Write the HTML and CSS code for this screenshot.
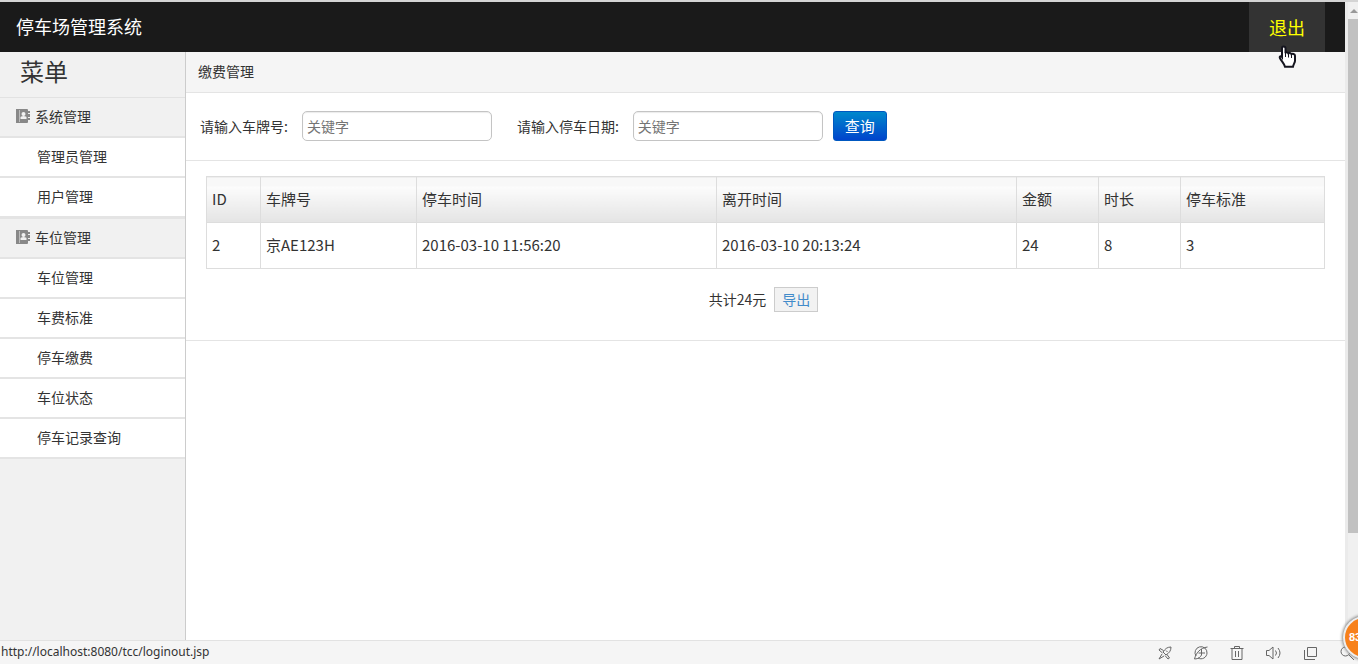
FILE: index.html
```html
<!DOCTYPE html>
<html lang="zh-CN">
<head>
<meta charset="utf-8">
<meta name="viewport" content="width=device-width, initial-scale=1">
<title>停车场管理系统</title>
<link rel="stylesheet" href="styles.css">
</head>
<body>
<div class="viewport">
  <div class="page">
    <header class="topbar">
      <h1 class="brand">停车场管理系统</h1>
      <a class="logout" href="#">退出
        <svg class="pointer" width="19" height="23" viewBox="0 0 19 23" aria-hidden="true">
          <path d="M5.500 1.500c1 0 2 .6 2 1.700v5c0-1 2.500-1.200 3 .3 .5-1 2.500-.8 3 .7 .8-.8 3.500-.3 3.500 1.500v5c0 2-1.500 3-2 6H7c-.8-3-3.500-5.500-5-8.500-1-2 1-2.700 2-1.200V3.200c0-1 .6-1.700 1.500-1.700z" fill="#fff" stroke="#15151f" stroke-width="2"/>
          <path d="M7.500 8v4M10.500 8.500v4M13.500 9.500v3.500" stroke="#15151f" fill="none"/>
        </svg>
      </a>
    </header>
    <div class="body">
      <nav class="sidebar" aria-label="菜单">
        <h2 class="menu-title">菜单</h2>
        <section class="group">
          <h3 class="group-title">
            <svg class="book" width="15" height="14" viewBox="0 0 15 14" aria-hidden="true"><path d="M1 0h11q1 0 1 1v1h2v2h-2v1h2v3h-2v1h2v2h-2v2q0 1-1 1H1z" fill="#888"/><path d="M4.500 1v12" stroke="#bbb"/><circle cx="8.500" cy="5" r="2" fill="#f1f1f1"/><path d="M5.500 10V8.500q0-1.500 3-1.500t3 1.500V10z" fill="#f1f1f1"/></svg>
            系统管理</h3>
          <a class="item" href="#">管理员管理</a>
          <a class="item" href="#">用户管理</a>
        </section>
        <section class="group">
          <h3 class="group-title">
            <svg class="book" width="15" height="14" viewBox="0 0 15 14" aria-hidden="true"><path d="M1 0h11q1 0 1 1v1h2v2h-2v1h2v3h-2v1h2v2h-2v2q0 1-1 1H1z" fill="#888"/><path d="M4.500 1v12" stroke="#bbb"/><circle cx="8.500" cy="5" r="2" fill="#f1f1f1"/><path d="M5.500 10V8.500q0-1.500 3-1.500t3 1.500V10z" fill="#f1f1f1"/></svg>
            车位管理</h3>
          <a class="item" href="#">车位管理</a>
          <a class="item" href="#">车费标准</a>
          <a class="item" href="#">停车缴费</a>
          <a class="item" href="#">车位状态</a>
          <a class="item" href="#">停车记录查询</a>
        </section>
      </nav>
      <main class="main">
        <div class="crumb">缴费管理</div>
        <form class="search">
          <label for="plate">请输入车牌号:</label>
          <input id="plate" class="field" type="text" placeholder="关键字">
          <label class="second" for="date">请输入停车日期:</label>
          <input id="date" class="field" type="text" placeholder="关键字">
          <button class="query" type="button">查询</button>
        </form>
        <section class="results">
          <table class="records">
            <colgroup><col class="c-id"><col class="c-plate"><col class="c-time"><col class="c-time"><col class="c-num"><col class="c-num"><col class="c-std"></colgroup>
            <thead><tr><th>ID</th><th>车牌号</th><th>停车时间</th><th>离开时间</th><th>金额</th><th>时长</th><th>停车标准</th></tr></thead>
            <tbody><tr><td>2</td><td>京AE123H</td><td>2016-03-10 11:56:20</td><td>2016-03-10 20:13:24</td><td>24</td><td>8</td><td>3</td></tr></tbody>
          </table>
          <div class="summary"><span>共计24元</span><a class="export" href="#">导出</a></div>
        </section>
      </main>
    </div>
  </div>
  <div class="scrollbar" aria-hidden="true"><div class="arrow"></div><div class="thumb"></div></div>
</div>
<footer class="status">
  <span class="url">http://localhost:8080/tcc/loginout.jsp</span>
  <div class="tools">
    <svg width="16" height="16" viewBox="0 0 16 16" aria-hidden="true"><path d="M14 2c-4 0-6 2-8 5l3 3c3-2 5-4 5-8zM6.500 5.500L3 3.500 2 5l3.500 3M10 9.500l2.500 3.500L11 14l-3-3.500M5 9l-3 5 5-3M9 5.500l1.500 1.500"/></svg>
    <svg width="16" height="16" viewBox="0 0 16 16" aria-hidden="true"><path d="M3 11A6 6 0 1 1 14 8 6 6 0 0 1 5 13M1.500 14C3 8 7 3 14.500 2M1.500 14c4 0 6-2 7-4M8.500 4v6M5.500 8H12"/></svg>
    <svg width="16" height="16" viewBox="0 0 16 16" aria-hidden="true"><path d="M1.500 3.500h13M5.500 3V1.500h5V3M3 4v10.500h10V4M6.500 6v6M9.500 6v6"/></svg>
    <svg width="18" height="16" viewBox="0 0 18 16" aria-hidden="true"><path d="M1.500 5.500v5h2.500l4 3.500V2L4 5.500zM10.500 5.500q2 2.500 0 5M13 3q4 5 0 10"/></svg>
    <svg width="16" height="16" viewBox="0 0 16 16" aria-hidden="true"><path d="M4.500 2.500h9v9h-9zM1.500 5v9.500H12"/></svg>
    <svg width="16" height="16" viewBox="0 0 16 16" aria-hidden="true"><circle cx="6.500" cy="6.500" r="4.500"/><path d="M10 10l5 5"/></svg>
  </div>
</footer>
<div class="ball-clip"><div class="ball">83</div></div>
</body>
</html>
```
FILE: styles.css
```css
* { box-sizing: border-box; }
body {
  margin: 0;
  height: 100vh;
  display: flex;
  flex-direction: column;
  overflow: hidden;
  position: relative;
  background: #fff;
  color: #333;
  font: 14px/20px "Noto Sans CJK SC", sans-serif;
}
h1, h2, h3 { margin: 0; font-weight: 400; }
a { color: inherit; text-decoration: none; }
.viewport { flex: 1; min-height: 0; display: flex; border-top: 2px solid #d4d4d4; }
.page { flex: 1; min-width: 0; display: flex; flex-direction: column; }
.topbar {
  flex: none;
  height: 50px;
  padding: 0 20px 0 16px;
  display: flex;
  align-items: center;
  justify-content: space-between;
  background: #1a1a1a;
}
.brand { padding-bottom: 2px; color: #fff; font-size: 18px; line-height: 26px; }
.logout {
  position: relative;
  padding: 0 20px;
  background: #333;
  color: #ff0;
  font-size: 18px;
  line-height: 50px;
}
.pointer { position: absolute; left: 29px; top: 43px; z-index: 2; }
.body { flex: 1; min-height: 0; display: flex; }
.sidebar { flex: none; width: 186px; background: #f1f1f1; border-right: 1px solid #ccc; }
.menu-title {
  padding: 0 20px 7px;
  font-size: 24px;
  line-height: 38px;
  border-bottom: 1px solid #e2e2e2;
}
.group + .group { border-top: 1px solid #e4e4e4; }
.group-title {
  display: flex;
  align-items: center;
  gap: 5px;
  height: 40px;
  padding: 0 15px 2px;
  font-size: 14px;
  border-bottom: 2px solid #e4e4e4;
}
.book { margin-bottom: 1px; }
.item {
  display: block;
  height: 40px;
  padding: 0 37px;
  line-height: 36px;
  background: #fff;
  border-bottom: 2px solid #e4e4e4;
}
.main { flex: 1; min-width: 0; }
.crumb {
  padding: 9px 12px 11px;
  background: #f5f5f5;
  border-bottom: 1px solid #e4e4e4;
}
.search {
  display: flex;
  align-items: center;
  padding: 18px 14px 19px;
  border-bottom: 1px solid #e4e4e4;
}
.field {
  width: 190px;
  height: 30px;
  margin: 0 0 0 14px;
  padding: 4px;
  border: 1px solid #c4c4c4;
  border-radius: 5px;
  background: #fff;
  box-shadow: inset 0 1px 1px rgba(0, 0, 0, .08);
  font: inherit;
}
.field::placeholder { color: #757575; opacity: 1; }
.second { margin-left: 25px; }
.query {
  height: 30px;
  margin: 0 0 0 10px;
  padding: 0 11px 1px;
  border: 1px solid #0058c0;
  border-radius: 3px;
  background: linear-gradient(#0088cc, #0044cc);
  color: #fff;
  font: inherit;
  font-size: 15px;
}
.results { padding: 15px 20px 28px; border-bottom: 1px solid #e4e4e4; }
.records {
  width: 100%;
  table-layout: fixed;
  border-collapse: collapse;
  font-size: 15px;
}
.records th, .records td {
  height: 46px;
  padding: 0 5px 2px;
  border: 1px solid #ddd;
  text-align: left;
  font-weight: 400;
}
.records th { background: linear-gradient(#f8f8f8 9px, #fcfcfc 9px, #e4e4e4); }
.c-id { width: 54px; }
.c-plate { width: 156px; }
.c-time { width: 300px; }
.c-num { width: 82px; }
.c-std { width: 144px; }
.summary { display: flex; align-items: center; justify-content: center; gap: 8px; margin-top: 18px; padding-right: 4px; }
.summary span { padding-bottom: 2px; }
.export {
  padding: 1px 7px 2px;
  border: 1px solid #ccc;
  background: #f2f2f2;
  color: #428bca;
}
.scrollbar { flex: none; width: 13px; background: #f0f0f0; border-left: 3px solid #ebebeb; }
.arrow { height: 17px; padding: 7px 0 0 2px; }
.arrow::before {
  content: "";
  display: block;
  width: 0;
  border: 4px solid transparent;
  border-top: 0;
  border-bottom-color: #999;
}
.thumb { height: 83%; max-height: 514px; background: #c1c1c1; }
.status {
  flex: none;
  height: 24px;
  display: flex;
  align-items: center;
  justify-content: space-between;
  padding: 0 3px 0 1px;
  background: #f5f5f5;
  border-top: 1px solid #e2e2e2;
  font: 12px/20px "Noto Sans", sans-serif;
}
.url { padding-bottom: 2px; }
.tools { display: flex; gap: 20px; }
.tools svg { fill: none; stroke: #666; }
.ball-clip { position: absolute; right: 0; bottom: 0; width: 20px; height: 54px; overflow: hidden; }
.ball {
  position: absolute;
  left: 5px;
  top: 6px;
  width: 43px;
  height: 43px;
  padding-left: 4px;
  border: 2px solid #eee;
  border-radius: 50%;
  box-shadow: 0 0 3px 1px #888;
  background: #f7811b;
  color: #fff;
  font: bold 11px/38px "Liberation Sans", sans-serif;
}
```
